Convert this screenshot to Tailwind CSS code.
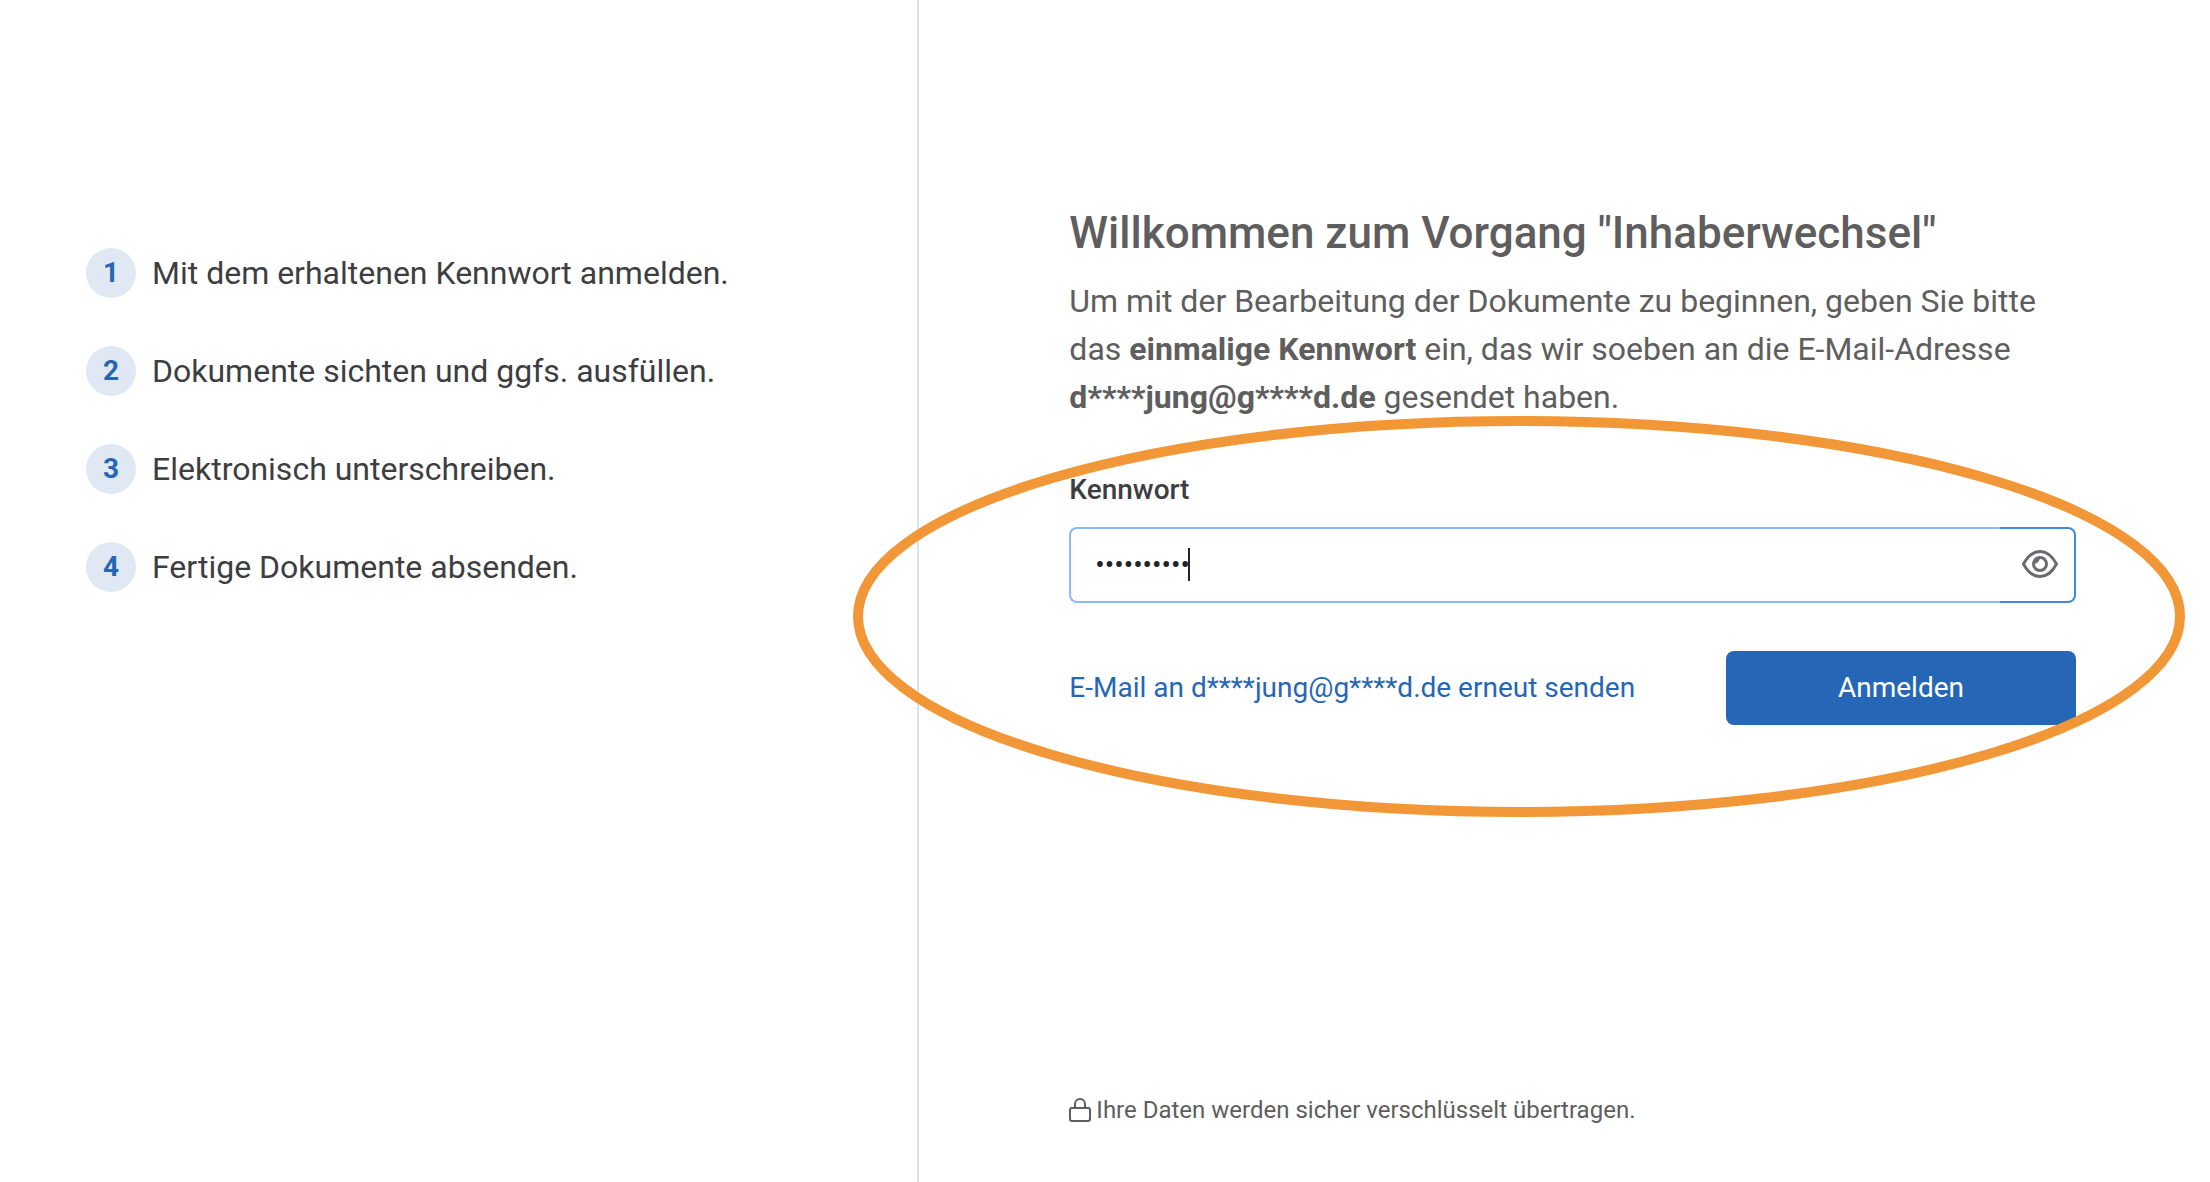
<!DOCTYPE html>
<html lang="de">
<head>
    <meta charset="UTF-8">
    <meta name="viewport" content="width=device-width, initial-scale=1.0">
    <title>Anmelden - Inhaberwechsel</title>
    <script src="https://cdn.jsdelivr.net/npm/@tailwindcss/browser@4"></script>
</head>
<body class="bg-white font-['Roboto',sans-serif]">
    <div class="relative flex min-h-screen overflow-hidden">
        <!-- Steps -->
        <aside class="w-[41.6%] shrink-0 border-r-2 border-[#dee2e6] pt-[248px] pl-[86px] pr-8">
            <ol class="flex flex-col gap-12 text-[32px] leading-[50px] text-[#3d3e42]">
                <li class="flex items-center gap-4">
                    <span class="size-[50px] shrink-0 rounded-full bg-[#e0e8f4] text-center text-[28px] font-bold text-[#2566b6]">1</span>
                    Mit dem erhaltenen Kennwort anmelden.
                </li>
                <li class="flex items-center gap-4">
                    <span class="size-[50px] shrink-0 rounded-full bg-[#e0e8f4] text-center text-[28px] font-bold text-[#2566b6]">2</span>
                    Dokumente sichten und ggfs. ausfüllen.
                </li>
                <li class="flex items-center gap-4">
                    <span class="size-[50px] shrink-0 rounded-full bg-[#e0e8f4] text-center text-[28px] font-bold text-[#2566b6]">3</span>
                    Elektronisch unterschreiben.
                </li>
                <li class="flex items-center gap-4">
                    <span class="size-[50px] shrink-0 rounded-full bg-[#e0e8f4] text-center text-[28px] font-bold text-[#2566b6]">4</span>
                    Fertige Dokumente absenden.
                </li>
            </ol>
        </aside>

        <!-- Login -->
        <main class="flex grow flex-col pt-[206px] pr-[134px] pb-[54px] pl-[150px]">
            <h1 class="text-[44px] leading-[55px] font-medium text-[#5e5e5e]">Willkommen zum Vorgang "Inhaberwechsel"</h1>
            <p class="mt-4 text-[32px] leading-12 text-[#5e5e5e]">
                Um mit der Bearbeitung der Dokumente zu beginnen, geben Sie bitte das <strong class="font-bold">einmalige Kennwort</strong> ein, das wir soeben an die E-Mail-Adresse <strong class="font-bold">d****jung@g****d.de</strong> gesendet haben.
            </p>

            <form class="mt-12">
                <label for="password" class="block text-[28px] leading-[42px] font-medium text-[#3d3e42]">Kennwort</label>
                <div class="relative mt-4 flex h-[76px]">
                    <input id="password" type="password" value="kennwort12" class="min-w-0 grow rounded-l-lg border-2 border-r-0 border-[#8bb9fe] bg-white px-6 text-[28px] text-[#212529] caret-transparent outline-none">
                    <span class="absolute top-[21px] left-[119px] h-[33px] w-[2px] bg-[#212529]"></span>
                    <button type="button" aria-label="Kennwort anzeigen" class="flex w-[76px] items-center justify-center rounded-r-lg border-2 border-l-0 border-[#3c8dd3] bg-white pb-0.5 pl-1.5 text-[#6c6c70]">
                        <svg class="h-7 w-9" viewBox="0 0 36 28" fill="none" stroke="currentColor" stroke-width="3">
                            <path d="M1.5 14C6 5.500 12 1.500 18 1.500S30 5.500 34.500 14C30 22.500 24 26.500 18 26.500S6 22.500 1.500 14Z" stroke-linejoin="round"/>
                            <circle cx="18" cy="14" r="6.500"/>
                            <path d="M11.500 14A6.500 6.500 0 0 1 18 7.500C18 11 15 14 11.500 14Z" fill="currentColor" stroke="none"/>
                        </svg>
                    </button>
                </div>
                <div class="mt-12 flex items-center justify-between">
                    <a href="#" class="text-[28px] text-[#2566b6]">E-Mail an d****jung@g****d.de erneut senden</a>
                    <button type="submit" class="h-[74px] w-[350px] rounded-lg bg-[#2566b6] text-[28px] text-white">Anmelden</button>
                </div>
            </form>

            <p class="mt-auto flex items-center gap-[5px] text-[24px] leading-9 text-[#5e5e5e]">
                <svg class="h-6 w-[22px]" viewBox="0 0 22 24" fill="none" stroke="currentColor" stroke-width="2">
                    <rect x="1" y="10" width="20" height="13" rx="2"/>
                    <path d="M6 10V6a5 5 0 0 1 10 0v4"/>
                </svg>
                Ihre Daten werden sicher verschlüsselt übertragen.
            </p>
        </main>

        <!-- Highlight -->
        <svg class="pointer-events-none absolute top-[416px] left-[853px] h-[401px] w-[1332px]" viewBox="0 0 1332 401" fill="none">
            <ellipse cx="666" cy="200.5" rx="661" ry="195.5" stroke="#f19737" stroke-width="10"/>
        </svg>
    </div>
</body>
</html>
